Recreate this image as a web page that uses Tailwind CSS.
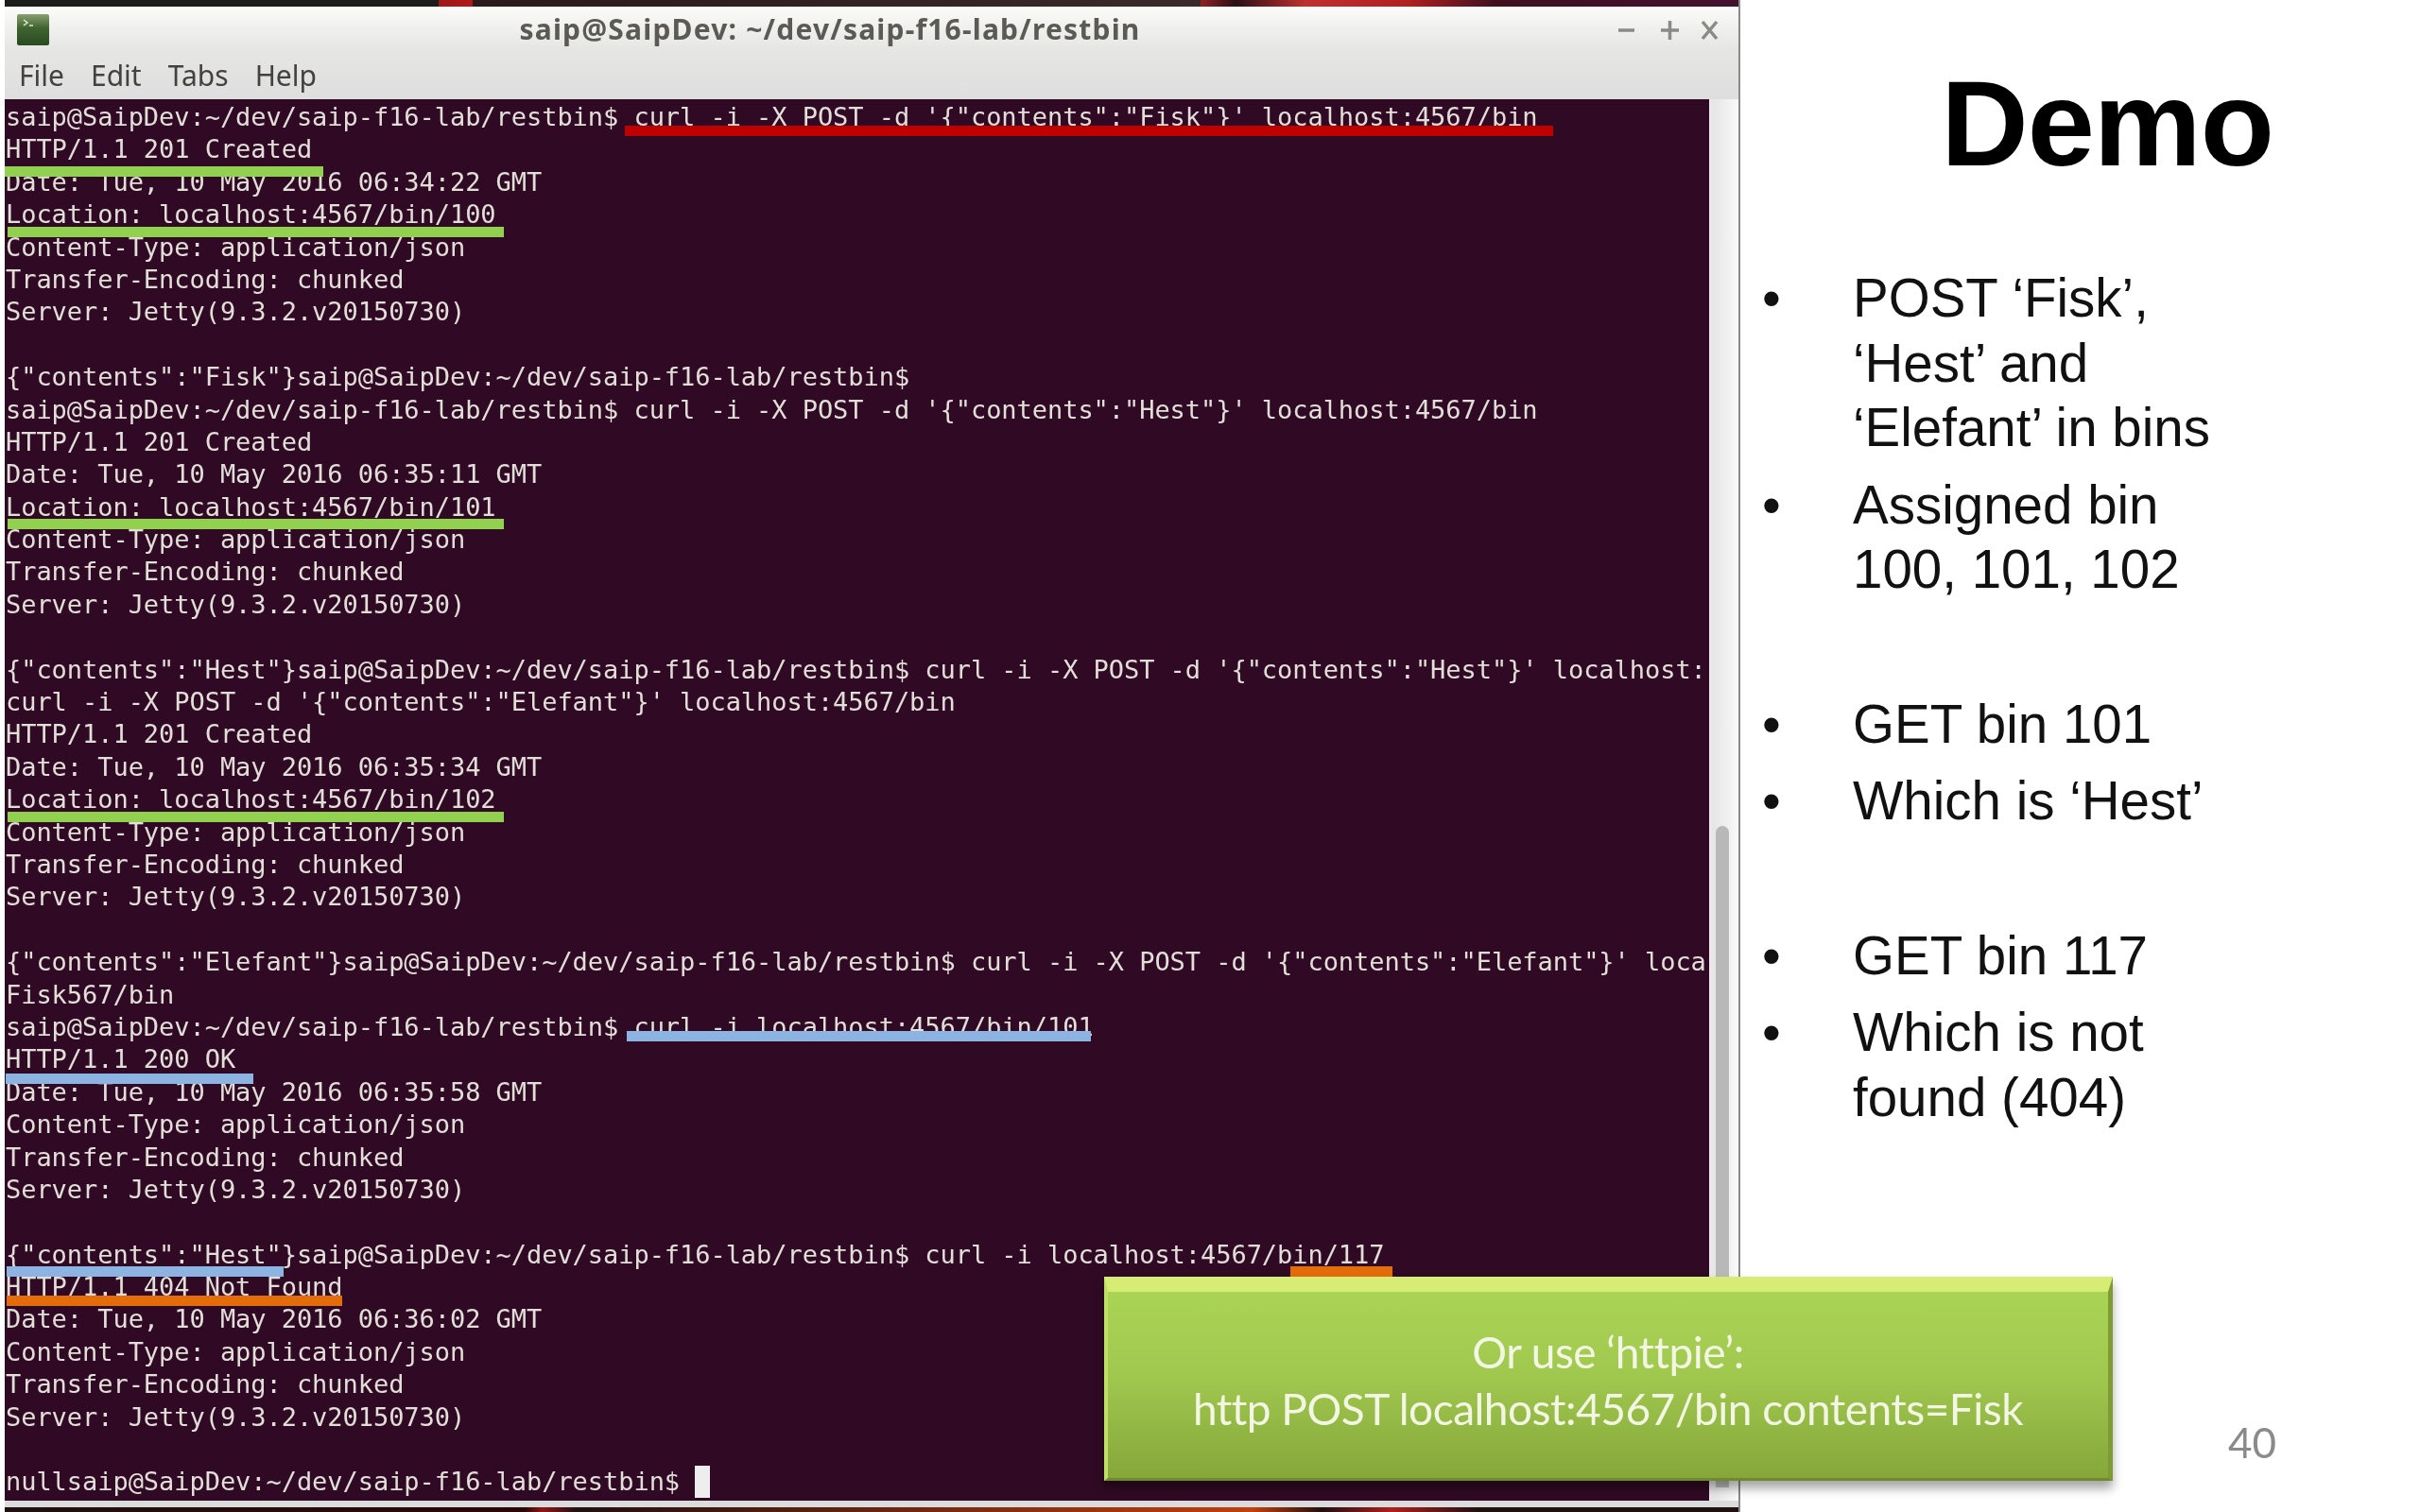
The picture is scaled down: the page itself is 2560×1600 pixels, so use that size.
<!DOCTYPE html>
<html><head><meta charset="utf-8"><script src="https://cdn.jsdelivr.net/npm/@tailwindcss/browser@4"></script></head>
<body class="bg-white">
<div class="relative w-[2560px] h-[1600px] overflow-hidden bg-white flex">
  <!-- terminal window -->
  <div class="ml-[5px] w-[1836px] h-[1600px] flex flex-col border-r-2 border-[#8a8a8a] shrink-0">
    <div class="h-[7px] shrink-0 bg-[linear-gradient(90deg,#1c1c1c_0,#1c1c1c_25%,#a01818_25%,#b01818_27%,#2a1a1a_27%,#3a2a2a_69%,#902020_69%,#2a1016_71%,#c03030_75%,#b02020_81%,#401020_86%,#451030_100%)]"></div>
    <div class="h-[98px] shrink-0 flex flex-col bg-[linear-gradient(180deg,#fbfbfa_0,#e6e6e5_45%,#dedede_100%)]">
      <div class="relative h-[46px] flex items-center justify-center blur-[0.5px]">
        <svg class="absolute left-[13px] top-[8px] w-[34px] h-[33px]" viewBox="0 0 34 33"><defs><linearGradient id="g" x1="0" y1="0" x2="0" y2="1"><stop offset="0" stop-color="#8a9f70"/><stop offset="0.45" stop-color="#3f6330"/><stop offset="1" stop-color="#2a4a20"/></linearGradient></defs><rect width="34" height="33" rx="2" fill="url(#g)"/><path d="M7 6l4 3-4 3" stroke="#dfe8d0" stroke-width="1.5" fill="none"/><path d="M13 12h4" stroke="#dfe8d0" stroke-width="1.5"/></svg>
        <span class="font-['Noto_Sans',sans-serif] font-bold text-[30px] tracking-[1.2px] text-[#5c5a55] -ml-[88px] whitespace-pre">saip@SaipDev: ~/dev/saip-f16-lab/restbin</span>
        <svg class="absolute left-[1702px] top-[14px] w-[110px] h-[24px] overflow-visible" viewBox="0 0 110 24" fill="none" stroke="#8b8a86" stroke-width="3.5"><path d="M5 11h17"/><path d="M50 11h19M59.500 1v20"/><path d="M94 2l15 18M109 2l-15 18"/></svg>
      </div>
      <div class="h-[52px] flex items-center pl-[15px] gap-[28px] font-['Noto_Sans',sans-serif] text-[30px] text-[#44423f] blur-[0.5px]">
        <span>File</span><span>Edit</span><span>Tabs</span><span>Help</span>
      </div>
    </div>
    <div class="flex-1 flex min-h-0">
      <div class="w-[1803px] h-[1483px] bg-[#300a24] overflow-hidden flex flex-col pt-[2px] pl-px font-['DejaVu_Sans_Mono',monospace] text-[27px] tracking-[-0.05px] leading-[34.4px] text-[#e2ded8] whitespace-pre">
        <div class="h-[34.4px] shrink-0 blur-[0.5px]">saip@SaipDev:~/dev/saip-f16-lab/restbin$ curl -i -X POST -d '{"contents":"Fisk"}' localhost:4567/bin</div>
        <div class="h-[34.4px] shrink-0 blur-[0.5px]">HTTP/1.1 201 Created</div>
        <div class="h-[34.4px] shrink-0 blur-[0.5px]">Date: Tue, 10 May 2016 06:34:22 GMT</div>
        <div class="h-[34.4px] shrink-0 blur-[0.5px]">Location: localhost:4567/bin/100</div>
        <div class="h-[34.4px] shrink-0 blur-[0.5px]">Content-Type: application/json</div>
        <div class="h-[34.4px] shrink-0 blur-[0.5px]">Transfer-Encoding: chunked</div>
        <div class="h-[34.4px] shrink-0 blur-[0.5px]">Server: Jetty(9.3.2.v20150730)</div>
        <div class="h-[34.4px] shrink-0"></div>
        <div class="h-[34.4px] shrink-0 blur-[0.5px]">{"contents":"Fisk"}saip@SaipDev:~/dev/saip-f16-lab/restbin$</div>
        <div class="h-[34.4px] shrink-0 blur-[0.5px]">saip@SaipDev:~/dev/saip-f16-lab/restbin$ curl -i -X POST -d '{"contents":"Hest"}' localhost:4567/bin</div>
        <div class="h-[34.4px] shrink-0 blur-[0.5px]">HTTP/1.1 201 Created</div>
        <div class="h-[34.4px] shrink-0 blur-[0.5px]">Date: Tue, 10 May 2016 06:35:11 GMT</div>
        <div class="h-[34.4px] shrink-0 blur-[0.5px]">Location: localhost:4567/bin/101</div>
        <div class="h-[34.4px] shrink-0 blur-[0.5px]">Content-Type: application/json</div>
        <div class="h-[34.4px] shrink-0 blur-[0.5px]">Transfer-Encoding: chunked</div>
        <div class="h-[34.4px] shrink-0 blur-[0.5px]">Server: Jetty(9.3.2.v20150730)</div>
        <div class="h-[34.4px] shrink-0"></div>
        <div class="h-[34.4px] shrink-0 blur-[0.5px]">{"contents":"Hest"}saip@SaipDev:~/dev/saip-f16-lab/restbin$ curl -i -X POST -d '{"contents":"Hest"}' localhost:</div>
        <div class="h-[34.4px] shrink-0 blur-[0.5px]">curl -i -X POST -d '{"contents":"Elefant"}' localhost:4567/bin</div>
        <div class="h-[34.4px] shrink-0 blur-[0.5px]">HTTP/1.1 201 Created</div>
        <div class="h-[34.4px] shrink-0 blur-[0.5px]">Date: Tue, 10 May 2016 06:35:34 GMT</div>
        <div class="h-[34.4px] shrink-0 blur-[0.5px]">Location: localhost:4567/bin/102</div>
        <div class="h-[34.4px] shrink-0 blur-[0.5px]">Content-Type: application/json</div>
        <div class="h-[34.4px] shrink-0 blur-[0.5px]">Transfer-Encoding: chunked</div>
        <div class="h-[34.4px] shrink-0 blur-[0.5px]">Server: Jetty(9.3.2.v20150730)</div>
        <div class="h-[34.4px] shrink-0"></div>
        <div class="h-[34.4px] shrink-0 blur-[0.5px]">{"contents":"Elefant"}saip@SaipDev:~/dev/saip-f16-lab/restbin$ curl -i -X POST -d '{"contents":"Elefant"}' loca</div>
        <div class="h-[34.4px] shrink-0 blur-[0.5px]">Fisk567/bin</div>
        <div class="h-[34.4px] shrink-0 blur-[0.5px]">saip@SaipDev:~/dev/saip-f16-lab/restbin$ curl -i localhost:4567/bin/101</div>
        <div class="h-[34.4px] shrink-0 blur-[0.5px]">HTTP/1.1 200 OK</div>
        <div class="h-[34.4px] shrink-0 blur-[0.5px]">Date: Tue, 10 May 2016 06:35:58 GMT</div>
        <div class="h-[34.4px] shrink-0 blur-[0.5px]">Content-Type: application/json</div>
        <div class="h-[34.4px] shrink-0 blur-[0.5px]">Transfer-Encoding: chunked</div>
        <div class="h-[34.4px] shrink-0 blur-[0.5px]">Server: Jetty(9.3.2.v20150730)</div>
        <div class="h-[34.4px] shrink-0"></div>
        <div class="h-[34.4px] shrink-0 blur-[0.5px]">{"contents":"Hest"}saip@SaipDev:~/dev/saip-f16-lab/restbin$ curl -i localhost:4567/bin/117</div>
        <div class="h-[34.4px] shrink-0 blur-[0.5px]">HTTP/1.1 404 Not Found</div>
        <div class="h-[34.4px] shrink-0 blur-[0.5px]">Date: Tue, 10 May 2016 06:36:02 GMT</div>
        <div class="h-[34.4px] shrink-0 blur-[0.5px]">Content-Type: application/json</div>
        <div class="h-[34.4px] shrink-0 blur-[0.5px]">Transfer-Encoding: chunked</div>
        <div class="h-[34.4px] shrink-0 blur-[0.5px]">Server: Jetty(9.3.2.v20150730)</div>
        <div class="h-[34.4px] shrink-0"></div>
        <div class="h-[34.4px] shrink-0 blur-[0.5px]">nullsaip@SaipDev:~/dev/saip-f16-lab/restbin$ <span class="inline-block w-[16px] h-[34px] bg-[#eeeeee] align-top"></span></div>
      </div>
      <div class="w-[31px] h-[1483px] bg-[linear-gradient(90deg,#f0e6ee_0,#e6e6e6_15%,#f2f2f2_70%,#fafafa_100%)] relative">
        <div class="absolute left-[7px] top-[769px] w-[14px] h-[700px] rounded-t-[7px] bg-[#b8b8b8]"></div>
      </div>
    </div>
    <div class="h-[7px] bg-[#dcdcdc] -mt-[2px] shrink-0"></div>
    <div class="h-[5px] shrink-0 bg-[linear-gradient(90deg,#201010_0,#2a0808_30%,#901818_31%,#201010_33%,#c04010_72%,#201010_76%,#b02020_80%,#201010_85%)]"></div>
  </div>
  <!-- slide text -->
  <div class="w-[719px] shrink-0 relative font-['Liberation_Sans',sans-serif] text-black">
    <h1 class="absolute left-[0px] top-[58px] w-[776px] text-center font-bold text-[128px] leading-[146px] tracking-[-1px] blur-[0.4px]">Demo</h1>
    <ul class="pt-[282px] pl-[23px] text-[56.500px] leading-[68.5px] text-[#111] blur-[0.4px]">
      <li class="flex"><span class="w-[96px] shrink-0">•</span><span>POST ‘Fisk’,<br>‘Hest’ and<br>‘Elefant’ in bins</span></li>
      <li class="flex mt-[13px]"><span class="w-[96px] shrink-0">•</span><span>Assigned bin<br>100, 101, 102</span></li>
      <li class="flex mt-[95px]"><span class="w-[96px] shrink-0">•</span><span>GET bin 101</span></li>
      <li class="flex mt-[13px]"><span class="w-[96px] shrink-0">•</span><span>Which is ‘Hest’</span></li>
      <li class="flex mt-[95px]"><span class="w-[96px] shrink-0">•</span><span>GET bin 117</span></li>
      <li class="flex mt-[13px]"><span class="w-[96px] shrink-0">•</span><span>Which is not<br>found (404)</span></li>
    </ul>
    <div class="absolute left-[516px] top-[1499px] font-['Lato',sans-serif] text-[44px] leading-[54px] text-[#8a8a8a] blur-[0.4px]">40</div>
  </div>
  <!-- marker strokes over the terminal -->
  <div class="absolute left-[661px] top-[133px] w-[982px] h-[11px] bg-[#c00000]"></div>
  <div class="absolute left-[5px] top-[176px] w-[337px] h-[11px] bg-[#92d050]"></div>
  <div class="absolute left-[8px] top-[240px] w-[525px] h-[11px] bg-[#92d050]"></div>
  <div class="absolute left-[8px] top-[549px] w-[525px] h-[11px] bg-[#92d050]"></div>
  <div class="absolute left-[8px] top-[859px] w-[525px] h-[11px] bg-[#92d050]"></div>
  <div class="absolute left-[663px] top-[1091px] w-[491px] h-[11px] bg-[#8db3e2]"></div>
  <div class="absolute left-[6px] top-[1136px] w-[262px] h-[11px] bg-[#8db3e2]"></div>
  <div class="absolute left-[7px] top-[1340px] w-[293px] h-[11px] bg-[#8db3e2]"></div>
  <div class="absolute left-[1365px] top-[1340px] w-[108px] h-[11px] bg-[#e46c0a]"></div>
  <div class="absolute left-[7px] top-[1371px] w-[355px] h-[11px] bg-[#e46c0a]"></div>
  <!-- callout -->
  <div class="absolute left-[1168px] top-[1351px] w-[1067px] h-[216px] flex flex-col items-center justify-center border-t-[16px] border-l-[4px] border-r-[5px] border-b-[3px] border-t-[#d6ec74] border-l-[#bfdf66] border-r-[#7f9c34] border-b-[#6f8a2c] bg-[linear-gradient(180deg,#aad455_0,#a0c84f_45%,#86a63a_100%)] shadow-[0_8px_10px_rgba(0,0,0,0.35)] font-['Lato',sans-serif] text-[46px] leading-[60px] text-[#f2f6e2] -tracking-[0.5px]">
    <div class="-mt-[10px] blur-[0.4px]">Or use ‘httpie’:</div>
    <div class="blur-[0.4px]">http POST localhost:4567/bin contents=Fisk</div>
  </div>
</div>
</body></html>
